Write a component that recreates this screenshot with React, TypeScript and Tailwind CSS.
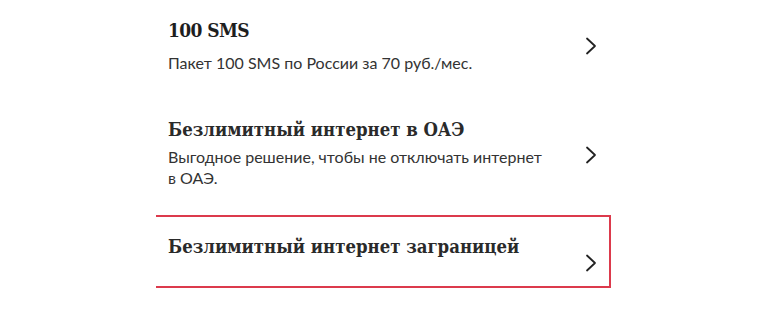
import React from "react";

const titleFont = { fontFamily: '"DejaVu Serif Condensed", "DejaVu Serif", serif' };
const bodyFont = { fontFamily: 'Lato, "Noto Sans", sans-serif' };

function Chevron({ className = "" }: { className?: string }) {
  return (
    <svg width="12" height="18" viewBox="0 0 12 18" className={className}>
      <path d="M2 1.5 L10 9 L2 16.5" fill="none" stroke="#222" strokeWidth="1.8" strokeLinecap="round" strokeLinejoin="round" />
    </svg>
  );
}

export default function App() {
  return (
    <div className="w-[770px] h-[330px] bg-white overflow-hidden">
      <div className="ml-[156px] w-[455px] flex flex-col">
        <div className="pt-[17px] pl-[12px] pr-[14px] flex items-center justify-between">
          <div className="flex flex-col gap-[9px]">
            <div style={titleFont} className="text-[19px] leading-[26px] font-bold tracking-[-0.6px] text-[#1e1e1e]">100 SMS</div>
            <div style={bodyFont} className="text-[16px] leading-[22px] text-[#333]">Пакет 100 SMS по России за 70 руб./мес.</div>
          </div>
          <Chevron />
        </div>
        <div className="pt-[43px] pl-[12px] pr-[14px] flex items-center justify-between">
          <div className="flex flex-col gap-[3px]">
            <div style={titleFont} className="text-[18.4px] leading-[26px] font-bold text-[#2a2a2a]">Безлимитный интернет в ОАЭ</div>
            <div style={bodyFont} className="w-[385px] text-[16px] leading-[21px] text-[#333]">Выгодное решение, чтобы не отключать интернет в ОАЭ.</div>
          </div>
          <Chevron className="mt-[4px]" />
        </div>
        <div className="mt-[27px] h-[73px] border-t-2 border-r-2 border-b-2 border-[#dc3a4c] pt-[17px] pl-[12px] pr-[12px] flex items-start justify-between">
          <div style={titleFont} className="text-[18.4px] leading-[26px] font-bold text-[#2a2a2a]">Безлимитный интернет заграницей</div>
          <Chevron className="mt-[20px]" />
        </div>
      </div>
    </div>
  );
}
